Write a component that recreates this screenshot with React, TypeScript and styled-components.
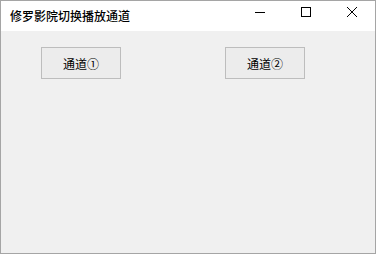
import styled, { createGlobalStyle } from 'styled-components';

const GlobalStyle = createGlobalStyle`
  html, body {
    margin: 0;
    padding: 0;
    background: #ffffff;
  }
  * {
    box-sizing: border-box;
  }
`;

const App = (): JSX.Element => {
    return (
        <>
            <GlobalStyle />
            <Window>
                <TitleBar>
                    <Title>修罗影院切换播放通道</Title>
                    <Controls>
                        <ControlButton>
                            <svg width="10" height="10" viewBox="0 0 10 10">
                                <line x1="0" y1="5.5" x2="10" y2="5.5" stroke="#000" strokeWidth="1" />
                            </svg>
                        </ControlButton>
                        <ControlButton>
                            <svg width="10" height="10" viewBox="0 0 10 10">
                                <rect x="0.5" y="0.5" width="9" height="9" fill="none" stroke="#000" strokeWidth="1" />
                            </svg>
                        </ControlButton>
                        <ControlButton>
                            <svg width="10" height="10" viewBox="0 0 10 10">
                                <path d="M0 0 L10 10 M10 0 L0 10" stroke="#000" strokeWidth="1" />
                            </svg>
                        </ControlButton>
                    </Controls>
                </TitleBar>
                <Body>
                    <ButtonRow>
                        <ChannelButton>通道①</ChannelButton>
                        <ChannelButton>通道②</ChannelButton>
                    </ButtonRow>
                </Body>
            </Window>
        </>
    )
}

export default App;


const Window = styled.div`
  width: 376px;
  height: 254px;
  display: flex;
  flex-direction: column;
  border: 1px solid #a5a5a5;
  font-family: "Noto Sans CJK SC", "Noto Sans", sans-serif;
`

const TitleBar = styled.div`
  height: 30px;
  background: #ffffff;
  display: flex;
  align-items: center;
  justify-content: space-between;
`

const Title = styled.div`
  margin-left: 9px;
  margin-top: -2px;
  font-size: 12px;
  font-weight: 500;
  color: #000;
`

const Controls = styled.div`
  display: flex;
  height: 100%;
`

const ControlButton = styled.div`
  width: 46px;
  height: 100%;
  display: flex;
  align-items: center;
  justify-content: center;
  padding-bottom: 9px;
  svg {
    display: block;
  }
`

const Body = styled.div`
  flex: 1;
  background: #f0f0f0;
`

const ButtonRow = styled.div`
  display: flex;
  gap: 104px;
  padding: 16px 0 0 40px;
`

const ChannelButton = styled.div`
  width: 80px;
  height: 32px;
  display: flex;
  align-items: center;
  justify-content: center;
  background: #ececec;
  border: 1px solid #bdbdbd;
  font-size: 12px;
  color: #000;
`
